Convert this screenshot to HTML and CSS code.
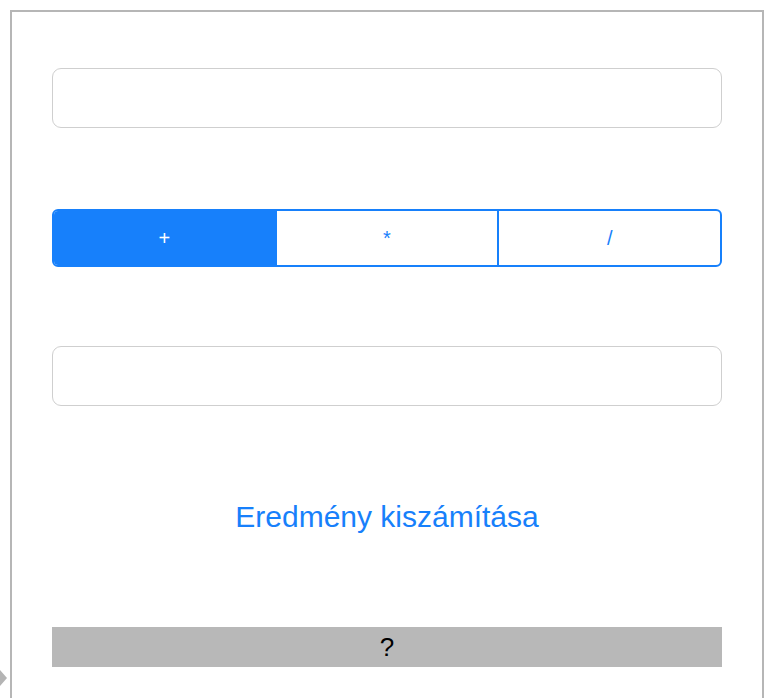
FILE: index.html
```html
<!DOCTYPE html>
<html lang="hu">
<head>
<meta charset="utf-8">
<link rel="stylesheet" href="styles.css">
</head>
<body>
<div class="marker"></div>
<div class="frame">
  <div class="field"></div>
  <div class="segmented">
    <div class="seg active">+</div>
    <div class="seg">*</div>
    <div class="seg">/</div>
  </div>
  <div class="field"></div>
  <div class="action">Eredmény kiszámítása</div>
  <div class="result">?</div>
</div>
</body>
</html>
```
FILE: styles.css
```css
html, body {
  margin: 0;
  padding: 0;
  background: #ffffff;
  overflow: hidden;
}
body {
  height: 698px;
  font-family: "Liberation Sans", Arial, sans-serif;
}
.marker {
  position: absolute;
  left: 0;
  top: 670px;
  width: 0;
  height: 0;
  border-top: 8px solid transparent;
  border-bottom: 8px solid transparent;
  border-left: 7px solid #b4b4b4;
}
.frame {
  box-sizing: border-box;
  margin: 10px 0 0 10px;
  width: 754px;
  height: 688px;
  border: 2px solid #b6b6b6;
  border-bottom: none;
  padding: 56px 40px 0 40px;
  display: flex;
  flex-direction: column;
}
.field {
  box-sizing: border-box;
  height: 60px;
  border: 1px solid #cfcfcf;
  border-radius: 9px;
  flex: none;
}
.segmented {
  box-sizing: border-box;
  margin-top: 81px;
  height: 58px;
  display: flex;
  border: 2px solid #1780fb;
  border-radius: 6px;
  overflow: hidden;
  margin-bottom: 79px;
  flex: none;
}
.seg {
  flex: 1;
  display: flex;
  align-items: center;
  justify-content: center;
  color: #1780fb;
  font-size: 20px;
  border-left: 2px solid #1780fb;
}
.seg:first-child {
  border-left: none;
}
.seg.active {
  background: #1780fb;
  color: #ffffff;
}
.action {
  margin-top: 93px;
  text-align: center;
  color: #1780fb;
  font-size: 30px;
  line-height: 36px;
  height: 36px;
}
.result {
  margin-top: 92px;
  height: 40px;
  background: #b8b8b8;
  color: #000;
  font-size: 26px;
  display: flex;
  align-items: center;
  justify-content: center;
}
```
